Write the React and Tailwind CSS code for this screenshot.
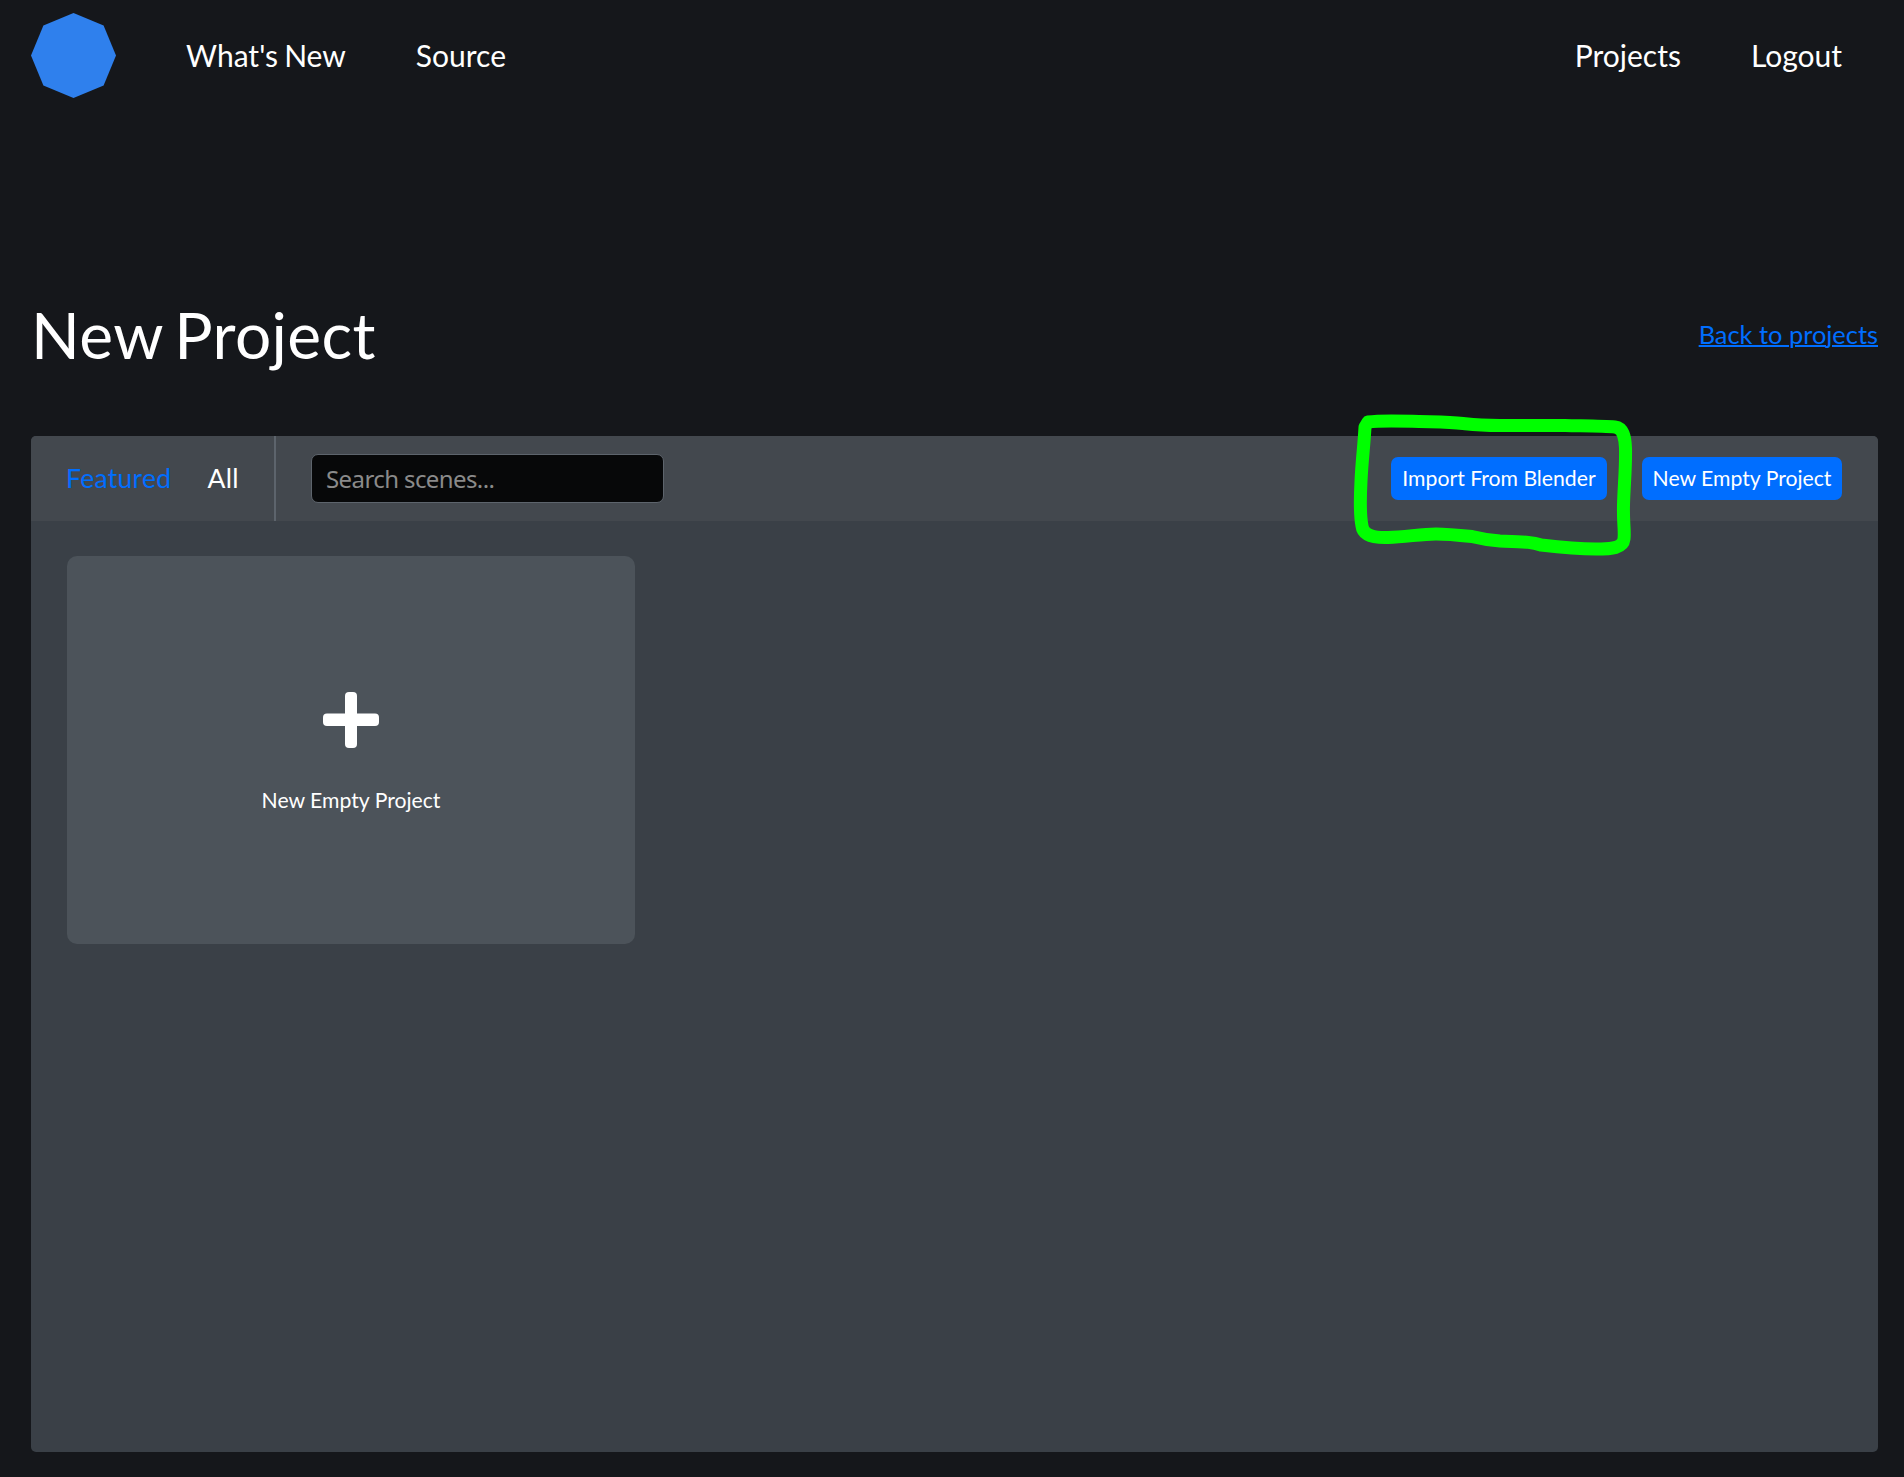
export default function App() {
  return (
    <div className="flex h-[1477px] w-[1904px] flex-col overflow-hidden bg-[#15171b] pr-[26px] pl-[31px] font-['Lato',sans-serif] text-white">
      <nav className="flex h-[113px] shrink-0 items-center justify-between pr-[36px] text-[30px] leading-[40px] [word-spacing:-1.5px]">
        <div className="flex items-center">
          <svg className="-mt-[2px] h-[85px] w-[85px]" viewBox="0 0 85 85">
            <path d="M42.5 0L72.6 12.4L85 42.5L72.6 72.6L42.5 85L12.4 72.6L0 42.5L12.4 12.4Z" fill="#2f80ed" />
          </svg>
          <a className="-mt-[3px] ml-[70px]">What's New</a>
          <a className="-mt-[3px] ml-[70px]">Source</a>
        </div>
        <div className="-mt-[3px] flex items-center gap-[70px]">
          <a>Projects</a>
          <a>Logout</a>
        </div>
      </nav>

      <header className="mt-[180px] flex h-[84px] shrink-0 items-center justify-between">
        <h1 className="text-[64px] leading-[84px] tracking-[0.4px] [word-spacing:-5px]">New Project</h1>
        <a className="-mt-[2px] text-[25.4px] leading-[34px] text-[#006eff] underline decoration-2">Back to projects</a>
      </header>

      <main className="relative mt-[59px] flex h-[1016px] shrink-0 flex-col rounded-[5px] bg-[#3a4047]">
        <div className="flex h-[85px] items-center rounded-t-[5px] bg-[#43484e] pr-[36px]">
          <div className="flex h-full w-[245px] items-center gap-[36px] border-r-2 border-[#5d646c] pl-[35px] text-[26.5px] tracking-[0.3px]">
            <a className="text-[#006eff]">Featured</a>
            <a>All</a>
          </div>
          <input
            className="ml-[35px] h-[49px] w-[353px] rounded-[7px] border border-[#5d646c] bg-[#070809] px-[14px] font-['Noto_Sans',sans-serif] text-[24px] tracking-[-0.6px] placeholder-[#8a8a8a] outline-none"
            placeholder="Search scenes..."
          />
          <div className="ml-auto flex gap-[35px] text-[21.2px] leading-[42px]">
            <button className="flex h-[43px] w-[216px] justify-center rounded-[7px] bg-[#006eff]">Import From Blender</button>
            <button className="flex h-[43px] w-[200px] justify-center rounded-[7px] bg-[#006eff]">New Empty Project</button>
          </div>
        </div>

        <div className="mt-[35px] ml-[36px] flex h-[388px] w-[568px] flex-col items-center rounded-[10px] bg-[#4c535a]">
          <svg className="mt-[136px] h-[56px] w-[56px]" viewBox="0 0 56 56" fill="#fff">
            <rect x="22" y="0" width="12" height="56" rx="4" />
            <rect x="0" y="21.5" width="56" height="12.5" rx="4" />
          </svg>
          <span className="mt-[38px] text-[21.2px] leading-[28px]">New Empty Project</span>
        </div>

        <svg className="pointer-events-none absolute -top-[36px] left-[1309px] h-[170px] w-[310px]" viewBox="0 0 310 170" fill="none">
          <path
            d="M28 22C42 20 62 21 79 21.5S110 22 123 23.5S139 25.5 160 25.5H225C250 26 264 26 275 27C283 28 285 36 285.500 48C286 68 284 85 283.500 105C283 123 285 131 284 139C283 148 272 149 256 149C238 149 218 147 201 145C192 142 187 142 160 141C144 140 138 138 132 136.500C117 135 104 134 96 134C81 134 66 137 48 137.500C32 138 23 135 22 126C20 116 20 100 21 81C22 60 24 46 25 27Z"
            stroke="#00ff00"
            strokeWidth="13"
            strokeLinejoin="round"
          />
        </svg>
      </main>
    </div>
  );
}
